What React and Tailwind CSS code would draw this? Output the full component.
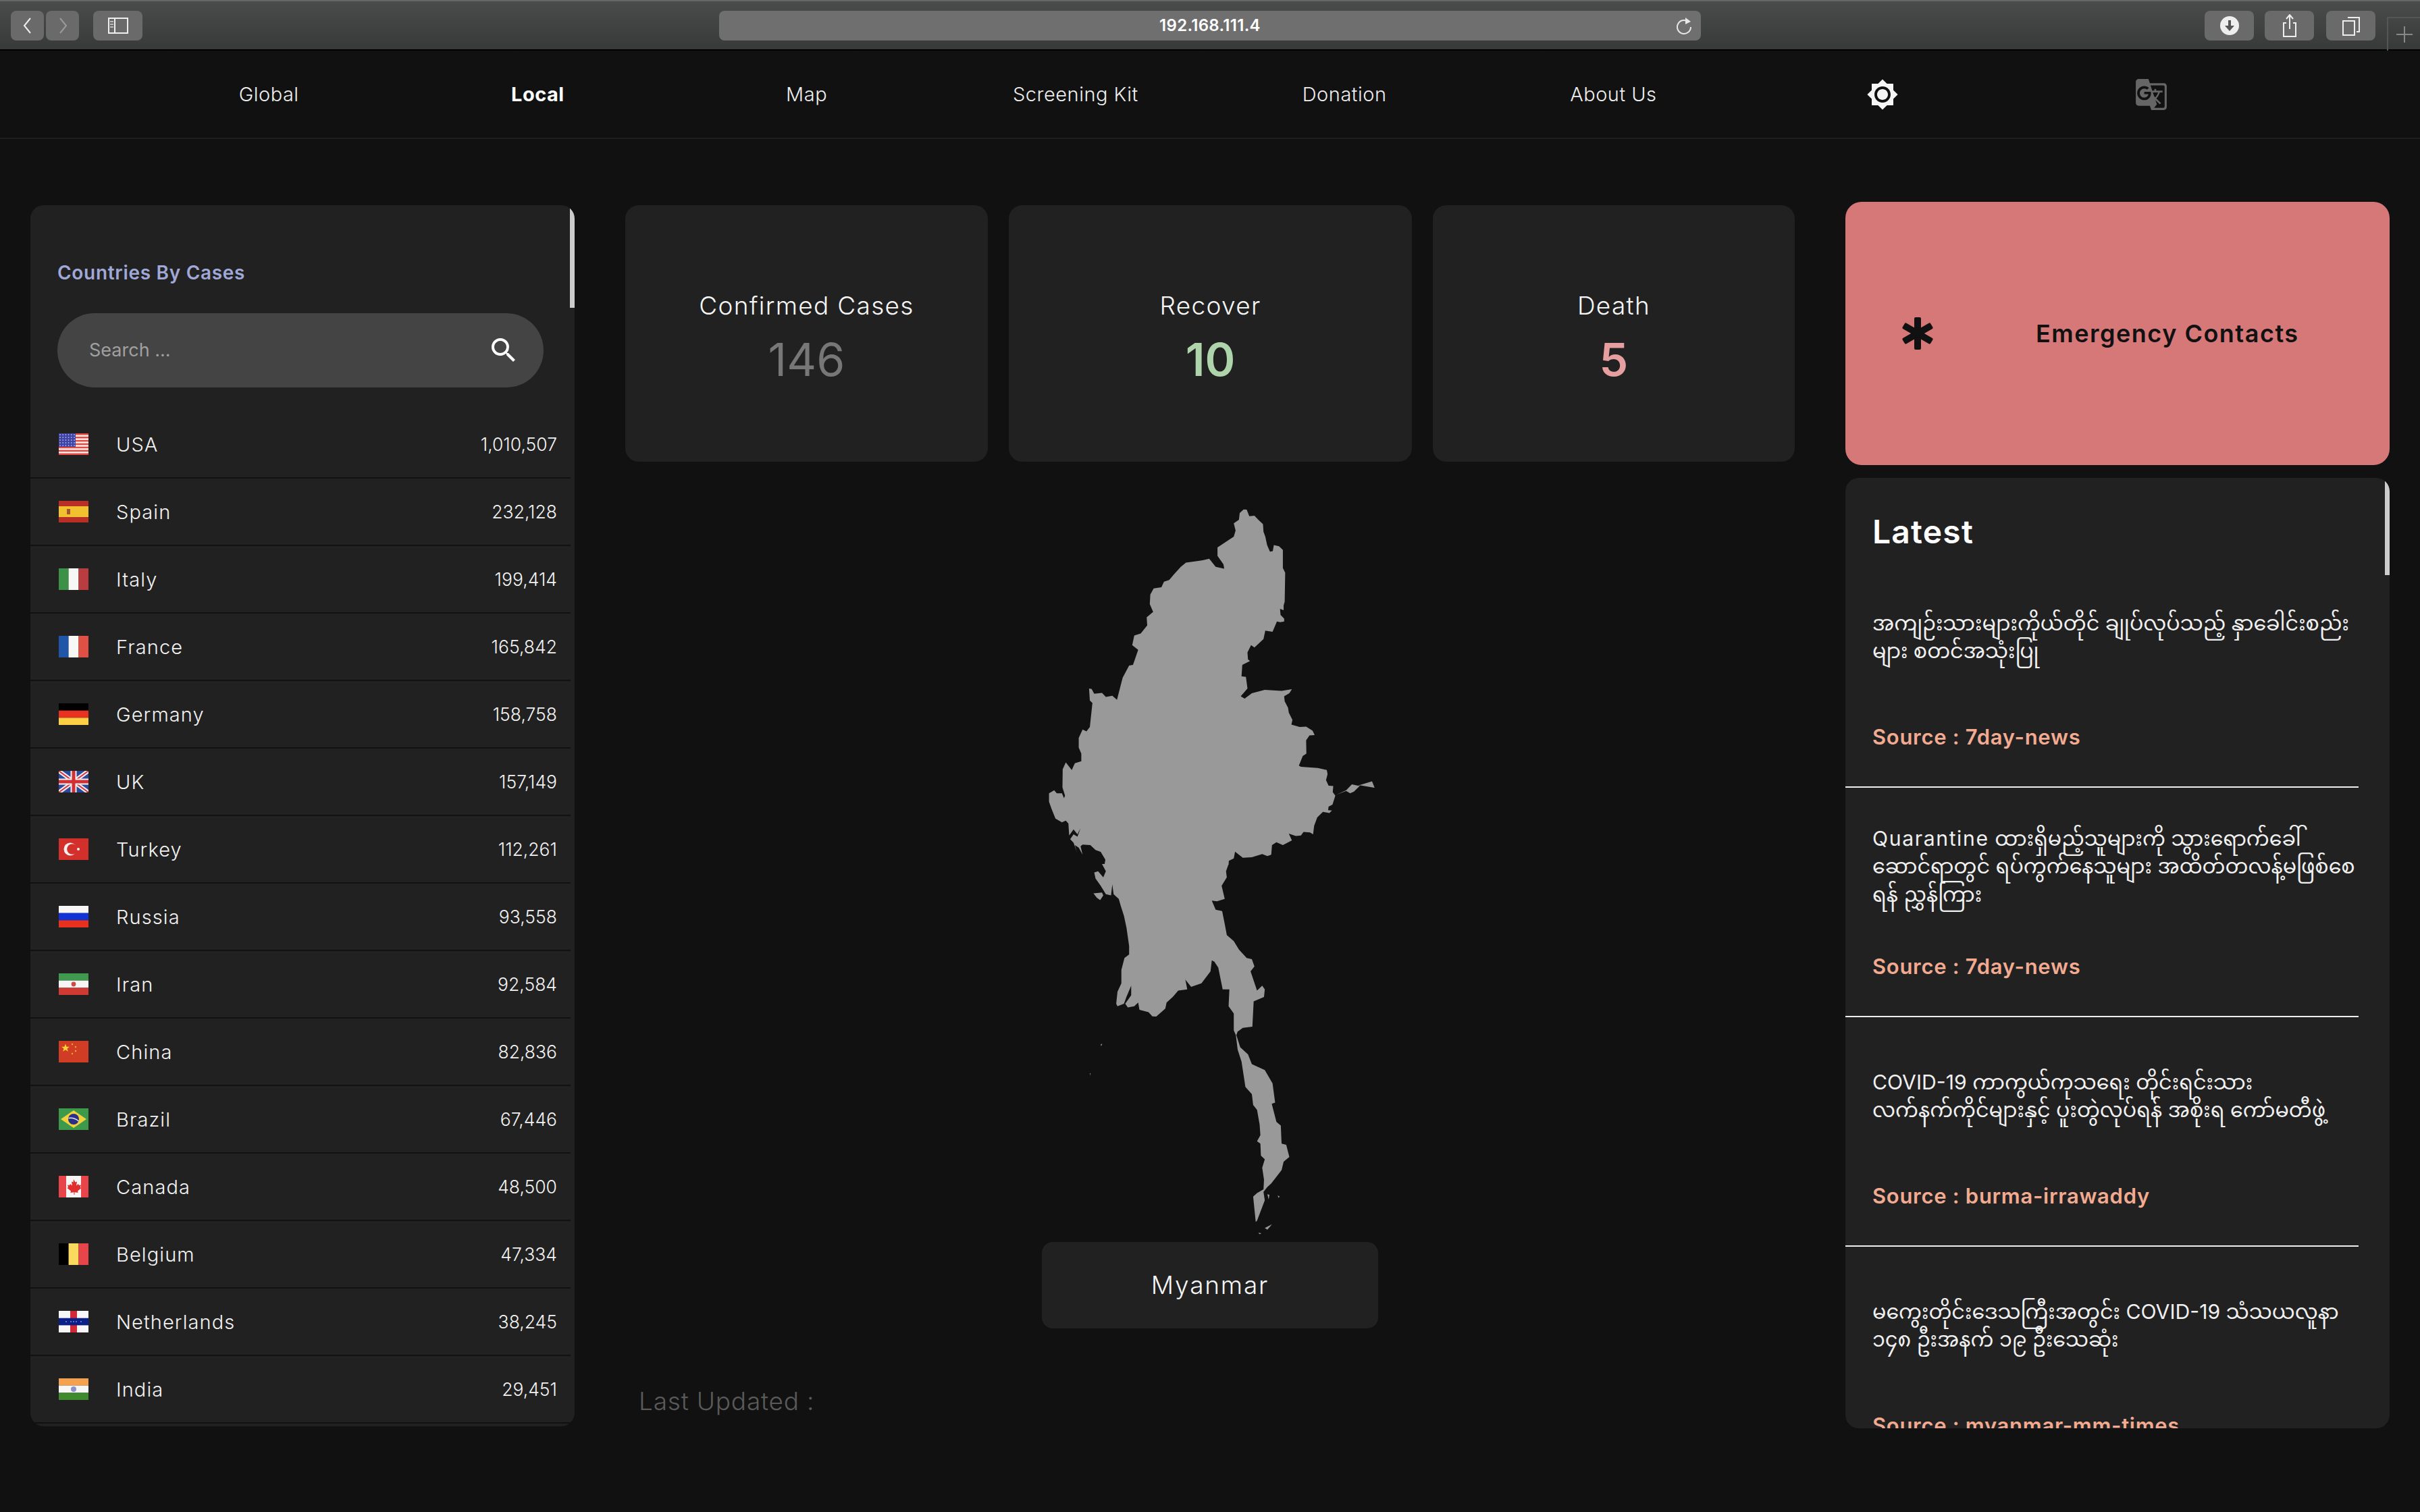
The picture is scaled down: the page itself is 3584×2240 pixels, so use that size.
import React from "react";
import { MdBrightness7, MdGTranslate, MdSearch } from "react-icons/md";

const R = ({ x, y, w, h, c }) => <rect x={x} y={y} width={w} height={h} fill={c} />;

const flags = {
  USA: (
    <>
      <R x={0} y={0} w={44} h={32} c="#f4f0ee" />
      {[0, 1, 2, 3, 4, 5, 6].map((i) => <R key={i} x={0} y={i * 4.92} w={44} h={2.46} c="#e8473f" />)}
      <R x={0} y={0} w={25} h={20} c="#3f43a5" />
      {[0, 1, 2, 3, 4].map((r) => [0, 1, 2, 3, 4, 5].map((c) => <circle key={r + "-" + c} cx={2 + c * 4.2} cy={2 + r * 4} r={0.9} fill="#aab0e0" />))}
    </>
  ),
  Spain: (
    <>
      <R x={0} y={0} w={44} h={32} c="#b92e25" />
      <R x={0} y={8} w={44} h={16} c="#f2c12f" />
      <R x={12} y={12} w={5} h={8} c="#a5552e" />
    </>
  ),
  Italy: (
    <>
      <R x={0} y={0} w={14.6} h={32} c="#3d9146" />
      <R x={14.6} y={0} w={14.8} h={32} c="#f7f7f5" />
      <R x={29.4} y={0} w={14.6} h={32} c="#b83c40" />
    </>
  ),
  France: (
    <>
      <R x={0} y={0} w={14.6} h={32} c="#1f56a8" />
      <R x={14.6} y={0} w={14.8} h={32} c="#f7f7f5" />
      <R x={29.4} y={0} w={14.6} h={32} c="#e05044" />
    </>
  ),
  Germany: (
    <>
      <R x={0} y={0} w={44} h={10.7} c="#000" />
      <R x={0} y={10.7} w={44} h={10.7} c="#e8321f" />
      <R x={0} y={21.4} w={44} h={10.6} c="#fccf45" />
    </>
  ),
  UK: (
    <>
      <R x={0} y={0} w={44} h={32} c="#2d4a9a" />
      <path d="M0 0L44 32M44 0L0 32" stroke="#f3eeee" strokeWidth="6" />
      <path d="M0 0L44 32M44 0L0 32" stroke="#cf3a45" strokeWidth="2" />
      <path d="M22 0V32M0 16H44" stroke="#f3eeee" strokeWidth="9" />
      <path d="M22 0V32M0 16H44" stroke="#cf2f35" strokeWidth="5" />
    </>
  ),
  Turkey: (
    <>
      <R x={0} y={0} w={44} h={32} c="#d32f2b" />
      <circle cx={17} cy={16} r={9.5} fill="#f7f0ef" />
      <circle cx={20} cy={16} r={7.8} fill="#d32f2b" />
      <circle cx={29} cy={16} r={2} fill="#f7f0ef" />
    </>
  ),
  Russia: (
    <>
      <R x={0} y={0} w={44} h={10.7} c="#f7f7f7" />
      <R x={0} y={10.7} w={44} h={10.7} c="#1433d6" />
      <R x={0} y={21.4} w={44} h={10.6} c="#e8321f" />
    </>
  ),
  Iran: (
    <>
      <R x={0} y={0} w={44} h={10.7} c="#3f9a4f" />
      <R x={0} y={10.7} w={44} h={10.7} c="#f7f5f3" />
      <R x={0} y={21.4} w={44} h={10.6} c="#cf3a35" />
      <circle cx={22} cy={16} r={3.4} fill="#cf4a45" />
    </>
  ),
  China: (
    <>
      <R x={0} y={0} w={44} h={32} c="#d13c24" />
      <path d="M10 4.5l1.6 4.2 4.4.1-3.5 2.7 1.3 4.3-3.8-2.6-3.8 2.6 1.3-4.3L4 8.8l4.4-.1z" fill="#f7d335" />
      <circle cx={20} cy={5} r={1.2} fill="#f0b02e" />
      <circle cx={25} cy={9} r={1.2} fill="#f0b02e" />
      <circle cx={25} cy={15} r={1.2} fill="#f0b02e" />
      <circle cx={20} cy={19} r={1.2} fill="#f0b02e" />
    </>
  ),
  Brazil: (
    <>
      <R x={0} y={0} w={44} h={32} c="#3e9a4b" />
      <path d="M22 3L41 16L22 29L3 16Z" fill="#f2d23c" />
      <circle cx={22} cy={16} r={8} fill="#2b2f86" />
      <path d="M14.5 14.5Q23 13 29.5 19" stroke="#e8e8f0" strokeWidth="1.4" fill="none" />
    </>
  ),
  Canada: (
    <>
      <R x={0} y={0} w={44} h={32} c="#f7f5f3" />
      <R x={0} y={0} w={11} h={32} c="#e8454a" />
      <R x={33} y={0} w={11} h={32} c="#e8454a" />
      <path d="M22 5l2.5 4.5 2.5-1-1 6 3-2.5 1 2 3-.5-1 3.5 1.5 1-5.5 4.5.7 2.5-5.2-.8V28h-1v-3.8l-5.2.8.7-2.5-5.5-4.5 1.5-1-1-3.5 3 .5 1-2 3 2.5-1-6 2.5 1z" fill="#e02d2d" />
    </>
  ),
  Belgium: (
    <>
      <R x={0} y={0} w={14.6} h={32} c="#000" />
      <R x={14.6} y={0} w={14.8} h={32} c="#f9da5e" />
      <R x={29.4} y={0} w={14.6} h={32} c="#e8454a" />
    </>
  ),
  Netherlands: (
    <>
      <R x={0} y={0} w={44} h={32} c="#f7f7f7" />
      <R x={0} y={10.7} w={44} h={10.7} c="#0a1f87" />
      <R x={17} y={0} w={10} h={32} c="#cf2a35" />
      <R x={17} y={10.7} w={10} h={10.7} c="#0a1f87" />
      {[11, 18, 22, 26, 33].map((x) => <circle key={x} cx={x} cy={16} r={1} fill="#7f8ad0" />)}
    </>
  ),
  India: (
    <>
      <R x={0} y={0} w={44} h={10.7} c="#f4a24f" />
      <R x={0} y={10.7} w={44} h={10.7} c="#f7f7f5" />
      <R x={0} y={21.4} w={44} h={10.6} c="#3f8a2e" />
      <circle cx={22} cy={16} r={4} fill="#8d92cf" />
    </>
  ),
};

const countries = [
  ["USA", "1,010,507"],
  ["Spain", "232,128"],
  ["Italy", "199,414"],
  ["France", "165,842"],
  ["Germany", "158,758"],
  ["UK", "157,149"],
  ["Turkey", "112,261"],
  ["Russia", "93,558"],
  ["Iran", "92,584"],
  ["China", "82,836"],
  ["Brazil", "67,446"],
  ["Canada", "48,500"],
  ["Belgium", "47,334"],
  ["Netherlands", "38,245"],
  ["India", "29,451"],
];

const navItems = ["Global", "Local", "Map", "Screening Kit", "Donation", "About Us"];

const news = [
  {
    id: 1,
    lines: ["အကျဉ်းသားများကိုယ်တိုင် ချုပ်လုပ်သည့် နှာခေါင်းစည်း", "များ စတင်အသုံးပြု"],
    source: "Source : 7day-news",
  },
  {
    id: 2,
    lines: [
      <>
        <span className="tracking-[1.6px]">Quarantine</span> ထားရှိမည့်သူများကို သွားရောက်ခေါ်
      </>,
      "ဆောင်ရာတွင် ရပ်ကွက်နေသူများ အထိတ်တလန့်မဖြစ်စေ",
      "ရန် ညွှန်ကြား",
    ],
    source: "Source : 7day-news",
  },
  {
    id: 3,
    lines: ["COVID-19 ကာကွယ်ကုသရေး တိုင်းရင်းသား", "လက်နက်ကိုင်များနှင့် ပူးတွဲလုပ်ရန် အစိုးရ ကော်မတီဖွဲ့"],
    source: "Source : burma-irrawaddy",
  },
  {
    id: 4,
    lines: ["မကွေးတိုင်းဒေသကြီးအတွင်း COVID-19 သံသယလူနာ", "၁၄၈ ဦးအနက် ၁၉ ဦးသေဆုံး"],
    source: "Source : myanmar-mm-times",
  },
];

const north =
  "893,97 905,98 915,125 935,123 950,140 968,158 970,190 977,210 984,245 995,272 1006,270 1010,245 1030,250 1045,265 1045,340 1054,360 1052,480 1048,495 1048,515 1034,510 1036,535 1050,550 1050,562 1035,565 1022,562 1005,605 977,600 970,635 935,670 922,660 908,690 910,720 918,726 888,742 885,790 902,792 908,840 882,872 897,882 925,860 975,846 1040,850 1080,843 1070,860 1050,872 1052,893 1065,920 1068,940 1082,970 1078,990 1110,1000 1135,998 1160,1015 1168,1033 1148,1035 1135,1055 1136,1110 1122,1120 1107,1160 1115,1165 1180,1170 1215,1178 1218,1195 1212,1220 1222,1243 1240,1245 1238,1270 1248,1285 1237,1322 1222,1330 1220,1345 1235,1346 1225,1357 1200,1352 1178,1375 1166,1410 1162,1445 1150,1437 1125,1435 1115,1450 1095,1452 1068,1442 1080,1470 1045,1490 1020,1478 1003,1490 1000,1530 985,1535 965,1527 925,1540 890,1542 860,1517 855,1545 836,1555 835,1570 355,1570 358,1550 340,1518 320,1510 300,1490 270,1488 262,1495 270,1530 255,1500 240,1490 248,1520 235,1480 222,1465 235,1445 250,1455 262,1420 250,1445 235,1425 218,1450 215,1400 205,1388 190,1395 165,1380 150,1340 140,1310 140,1275 160,1262 170,1275 190,1275 198,1295 202,1285 192,1250 193,1175 205,1147 228,1178 240,1150 265,1142 265,1110 255,1085 255,1045 270,1010 285,1018 298,1000 308,900 298,890 295,840 305,842 315,862 345,858 360,875 385,870 403,887 425,795 450,745 465,742 485,680 462,660 470,620 495,612 520,578 518,545 543,522 530,490 532,450 545,425 575,420 585,397 605,390 625,365 650,335 670,318 735,308 760,302 785,335 818,343 815,325 792,290 792,255 855,210 862,185 855,155 875,140 878,112";
const spur = "1250,1282 1290,1262 1312,1238 1342,1245 1320,1268 1305,1275 1290,1265 1345,1240 1390,1225 1400,1252 1345,1242";
const south =
  "835,0 825,30 828,55 808,90 820,145 790,155 770,152 785,190 810,195 822,260 828,295 855,320 875,355 905,390 925,395 935,425 920,445 945,525 965,505 975,520 972,552 932,570 927,675 890,680 870,695 865,710 880,760 910,790 925,830 975,855 1005,910 1015,990 1002,995 1020,1070 1037,1085 1040,1160 1058,1165 1070,1215 1048,1235 1040,1270 1000,1325 985,1340 970,1360 975,1395 945,1480 940,1485 930,1380 945,1365 970,1350 972,1310 965,1260 975,1225 960,1210 958,1160 945,1150 958,1125 955,1080 945,1020 930,1000 925,955 900,925 885,820 870,770 863,710 855,690 855,620 835,590 838,520 812,520 795,430 780,405 770,400 765,445 730,495 690,510 668,480 665,465 675,520 640,525 620,550 595,575 590,600 555,633 540,632 525,615 490,605 485,575 470,590 445,595 435,580 458,545 458,505 440,550 430,580 405,590 400,580 405,530 420,495 420,440 432,390 450,375 450,340 440,265 430,215 418,175 410,145 390,125 385,85 380,130 360,125 340,90 320,60 315,35 330,30 350,55 360,30 345,0";

function MapShape() {
  return (
    <svg viewBox="-8 0 600 1120" className="block mx-auto w-[600px] h-[1120px]" fill="#999999">
      <g transform="scale(0.3827 0.3571)">
        <polygon points={north} />
        <polygon points={spur} />
      </g>
      <g transform="translate(0 560) scale(0.3827 0.3571)">
        <polygon points={south} />
        <polygon points="312,122 345,118 350,130 338,150 325,140" />
        <polygon points="975,1510 1003,1495 985,1517" />
        <polygon points="950,1530 962,1532 955,1536" />
        <polygon points="1025,1375 1033,1380 1028,1385" />
        <polygon points="985,1370 993,1372 990,1392" />
        <polygon points="340,748 346,746 342,756" />
        <polygon points="298,868 301,868 300,878" />
      </g>
    </svg>
  );
}

function ToolButton({ className, children }) {
  return <div className={"h-[44px] rounded-[8px] bg-[#696a69] flex items-center justify-center " + className}>{children}</div>;
}

function Toolbar() {
  return (
    <div className="relative h-[75px] flex items-start bg-linear-to-b from-[#4a4c4b] to-[#383a39] border-t-2 border-t-[#666] border-b-2 border-b-black pt-[14px]">
      <ToolButton className="w-[49px] ml-[16px]">
        <svg width="20" height="26" viewBox="0 0 20 26" fill="none" stroke="#eeeeee" strokeWidth="2"><path d="M14 2L5 13L14 24" /></svg>
      </ToolButton>
      <ToolButton className="w-[49px] ml-[3px]">
        <svg width="20" height="26" viewBox="0 0 20 26" fill="none" stroke="#9a9a9a" strokeWidth="2"><path d="M6 2L15 13L6 24" /></svg>
      </ToolButton>
      <ToolButton className="w-[73px] ml-[21px]">
        <svg width="30" height="24" viewBox="0 0 30 24" fill="none" stroke="#eeeeee" strokeWidth="2">
          <rect x="1" y="1" width="28" height="22" />
          <path d="M10 1V23" />
          <path d="M3 6H8M3 10H8M3 14H8" stroke="#bbbbbb" />
        </svg>
      </ToolButton>
      <div className="relative w-[1454px] h-[44px] ml-[854px] rounded-[8px] bg-[#6e6f6e] flex items-center justify-center text-[24px] tracking-[0.3px] font-semibold text-white">
        192.168.111.4
        <svg className="absolute right-[12px] top-[9px]" width="26" height="28" viewBox="0 0 26 28" fill="none" stroke="#e8e8e8" strokeWidth="2">
          <path d="M19 7A10 10 0 1 0 23 15" />
          <path d="M15 1L23 7L15 11Z" fill="#e8e8e8" stroke="none" />
        </svg>
      </div>
      <ToolButton className="w-[73px] ml-[746px]">
        <svg width="28" height="28" viewBox="0 0 28 28"><circle cx="14" cy="14" r="14" fill="#eeeeee" /><path d="M12 6H16V14H21L14 22L7 14H12Z" fill="#555" /></svg>
      </ToolButton>
      <ToolButton className="w-[73px] ml-[16px]">
        <svg width="24" height="34" viewBox="0 0 24 34" fill="none" stroke="#eeeeee" strokeWidth="2"><path d="M7 13H3V33H21V13H17" /><path d="M12 22V2M7 7L12 1L17 7" /></svg>
      </ToolButton>
      <ToolButton className="w-[73px] ml-[18px]">
        <svg width="28" height="30" viewBox="0 0 28 30" fill="none" stroke="#eeeeee" strokeWidth="2"><rect x="2" y="8" width="17" height="21" /><path d="M9 3H26V24H22" /></svg>
      </ToolButton>
      <div className="absolute right-0 top-[23px] w-[49px] h-[50px] border-l-2 border-t-2 border-[#555] flex items-center justify-center">
        <svg width="24" height="24" viewBox="0 0 24 24" stroke="#888" strokeWidth="2"><path d="M12 0V24M0 12H24" /></svg>
      </div>
    </div>
  );
}

function Nav() {
  return (
    <nav className="h-[131px] border-b-2 border-[#1e1e1e] px-[199px] grid grid-cols-8 items-center text-center text-[29px] tracking-[0.5px] text-[#eeeeee]">
      {navItems.map((n) => (
        <a key={n} className={n === "Local" ? "font-bold text-white" : "font-light"}>{n}</a>
      ))}
      <div className="flex justify-center"><MdBrightness7 size={48} color="#f5f5f5" /></div>
      <div className="flex justify-center"><MdGTranslate size={50} color="#666666" /></div>
    </nav>
  );
}

function Countries() {
  return (
    <aside className="relative mt-[5px] w-[806px] h-[1809px] rounded-[20px] bg-[#212121] overflow-hidden">
      <div className="absolute right-0 top-0 w-[7px] h-[152px] bg-[#cccccc]" />
      <h2 className="pt-[78px] pl-[40px] text-[28px] leading-[44px] tracking-[0.7px] font-semibold text-[#9fa8d6]">Countries By Cases</h2>
      <div className="mt-[38px] ml-[40px] w-[720px] h-[110px] rounded-full bg-[#444444] flex items-center justify-between pl-[47px] pr-[35px]">
        <span className="text-[27px] text-[#a0a0a0]">Search ...</span>
        <MdSearch size={48} color="#ffffff" />
      </div>
      <ul className="mt-[35px] w-[800px]">
        {countries.map(([name, value]) => (
          <li key={name} className="h-[100px] border-b-2 border-[#111111] flex items-center pl-[42px] pr-[20px] text-[#f2f2f2] font-light">
            <svg width="44" height="32" viewBox="0 0 44 32" className="shrink-0">{flags[name]}</svg>
            <span className="ml-[41px] flex-1 pt-[2px] text-[29px] tracking-[1.1px]">{name}</span>
            <span className="pt-[2px] text-[26.5px]">{value}</span>
          </li>
        ))}
      </ul>
    </aside>
  );
}

function Stat({ label, value, className, valueClass }) {
  return (
    <div className={"h-[380px] rounded-[20px] bg-[#212121] flex flex-col items-center pt-[126px] " + className}>
      <div className="text-[37px] leading-[46px] tracking-[1.3px] font-light text-[#f5f5f5]">{label}</div>
      <div className={"mt-[11px] text-[68px] leading-[90px] " + valueClass}>{value}</div>
    </div>
  );
}

function Center() {
  return (
    <section className="mt-[5px] w-[1732px]">
      <div className="flex justify-between">
        <Stat label="Confirmed Cases" value="146" className="w-[537px]" valueClass="font-normal text-[#777777]" />
        <Stat label="Recover" value="10" className="w-[597px]" valueClass="font-semibold text-[#aed4ab]" />
        <Stat label="Death" value="5" className="w-[536px]" valueClass="font-semibold text-[#e59f9f]" />
      </div>
      <div className="mt-[36px]"><MapShape /></div>
      <div className="mx-auto w-[498px] h-[128px] rounded-[16px] bg-[#212121] flex items-center justify-center text-[37px] tracking-[1.8px] font-light text-[#f5f5f5]">Myanmar</div>
      <div className="mt-[84px] ml-[20px] text-[37px] leading-[48px] tracking-[0.8px] font-light text-[#5a5a5a]">Last Updated :</div>
    </section>
  );
}

function RightColumn() {
  return (
    <aside className="w-[806px] flex flex-col gap-[19px]">
      <div className="h-[390px] rounded-[24px] bg-[#d67878] flex items-center pl-[84px] text-[#111111]">
        <svg width="46" height="48" viewBox="0 0 46 48" fill="currentColor" className="shrink-0">
          <rect x="18" y="0" width="10" height="48" rx="2" />
          <rect x="18" y="0" width="10" height="48" rx="2" transform="rotate(60 23 24)" />
          <rect x="18" y="0" width="10" height="48" rx="2" transform="rotate(-60 23 24)" />
        </svg>
        <span className="ml-[152px] text-[36px] tracking-[1.5px] font-semibold">Emergency Contacts</span>
      </div>
      <div className="relative h-[1408px] rounded-[20px] bg-[#212121] overflow-hidden">
        <div className="absolute right-0 top-0 w-[7px] h-[144px] bg-[#cccccc]" />
        <h2 className="h-[119px] pl-[40px] pt-[50px] text-[48px] leading-[60px] tracking-[1.2px] font-semibold text-white">Latest</h2>
        {news.map((item) => (
          <article key={item.id} className="w-[760px] h-[340px] border-b-2 border-[#eeeeee] pl-[40px]">
            <div className="h-[234px] flex flex-col justify-center text-[30.2px] leading-[41.5px] text-[#f0f0f0] whitespace-nowrap font-['Inter','Noto_Sans','Noto_Sans_Myanmar',sans-serif]">
              {item.lines.map((line, i) => <p key={i}>{line}</p>)}
            </div>
            <div className="mt-[10px] text-[31px] leading-[42px] tracking-[0.7px] font-semibold text-[#f2ab91]">{item.source}</div>
          </article>
        ))}
      </div>
    </aside>
  );
}

export default function App() {
  return (
    <div className="w-[3584px] h-[2240px] overflow-hidden bg-[#111111] font-['Inter','Noto_Sans',sans-serif]">
      <Toolbar />
      <Nav />
      <main className="flex justify-between px-[45px] pt-[93px]">
        <Countries />
        <Center />
        <RightColumn />
      </main>
    </div>
  );
}
